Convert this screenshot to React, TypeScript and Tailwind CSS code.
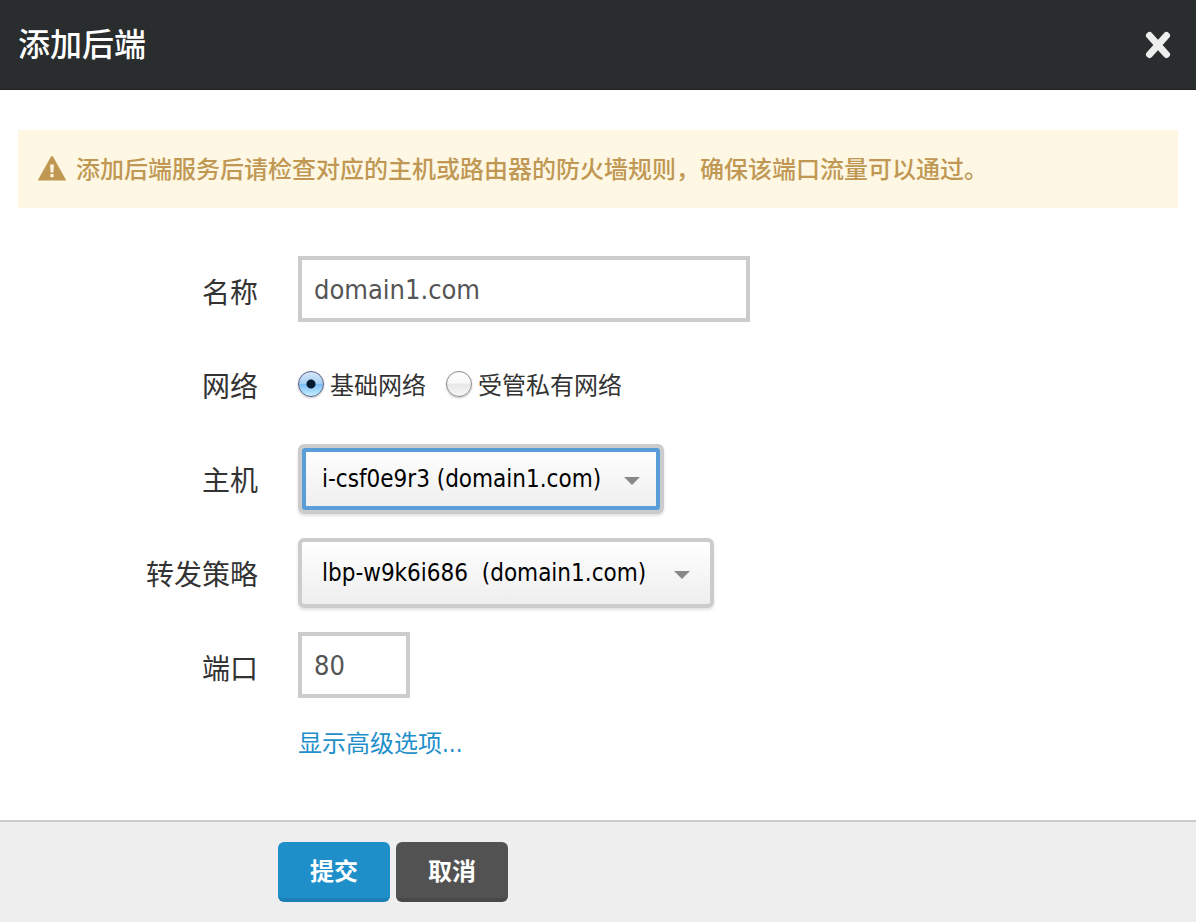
import type { ReactNode } from "react";

function Row({ label, htmlFor, children }: { label: string; htmlFor?: string; children: ReactNode }) {
  return (
    <div className="flex h-[72px] items-start gap-10">
      {htmlFor ? (
        <label htmlFor={htmlFor} className="w-60 shrink-0 text-right text-[28px] leading-[76px]">
          {label}
        </label>
      ) : (
        <span id="network-label" className="w-60 shrink-0 text-right text-[28px] leading-[76px]">
          {label}
        </span>
      )}
      {children}
    </div>
  );
}

function Radio({ label, checked }: { label: string; checked?: boolean }) {
  return (
    <label className="flex items-center gap-1.5 text-2xl">
      <input
        type="radio"
        name="network"
        defaultChecked={checked}
        className="size-[26px] appearance-none rounded-full border border-[#8c8c8c] bg-[linear-gradient(#ffffff_0%,#f8f8f8_45%,#e8e8e8_52%,#f6f6f6_100%)] shadow-[0_1px_2px_rgba(0,0,0,0.25)] checked:border-[#5c6088] checked:bg-[radial-gradient(circle,#041a30_4px,transparent_5px),linear-gradient(#d8e9f8_0%,#a5cff5_48%,#7dbcf5_52%,#c5f0ff_100%)]"
      />
      <span className="pt-1">{label}</span>
    </label>
  );
}

function Select({ id, value, className }: { id: string; value: string; className: string }) {
  return (
    <div className="grid items-center">
      <select
        id={id}
        className={
          "col-start-1 row-start-1 h-[70px] appearance-none rounded-md border-4 border-[#cccccc] bg-linear-to-b from-white to-[#eeeeee] pr-14 pl-5 text-2xl text-black shadow-[0_2px_3px_rgba(0,0,0,0.12)] outline-none " +
          className
        }
      >
        <option>{value}</option>
      </select>
      <svg
        viewBox="0 0 16 8"
        className="pointer-events-none col-start-1 row-start-1 mt-1 mr-6 h-2 w-4 justify-self-end fill-[#888888]"
        aria-hidden="true"
      >
        <path d="M0 0h16L8 8z" />
      </svg>
    </div>
  );
}

export default function App() {
  return (
    <div className="flex min-h-screen flex-col bg-white font-['DejaVu_Sans_Condensed','Noto_Sans_CJK_SC',sans-serif] text-[#333333]">
      <header className="flex h-[90px] items-center justify-between border-b border-[#1f2223] bg-[#2a2d2e] pr-6 pl-[18px]">
        <h1 className="text-[32px] leading-10 font-medium text-white">添加后端</h1>
        <button type="button" aria-label="关闭" className="p-0">
          <svg viewBox="0 0 28 28" className="size-7" fill="none" stroke="#eeeeee" strokeWidth="7" strokeLinecap="round" aria-hidden="true">
            <path d="M5.5 4.5l17 19M22.5 4.5l-17 19" />
          </svg>
        </button>
      </header>

      <form id="backend-form" className="flex-1 px-[18px] pt-10">
        <div role="alert" className="flex min-h-[78px] items-center gap-2.5 bg-[#fdf7e3] px-5 text-2xl font-medium text-[#c09853]">
          <svg viewBox="0 0 28 26" className="h-[26px] w-7 shrink-0" aria-hidden="true">
            <path d="M12.9.8Q14-.8 15.1.8L27.8 23.4Q28.2 24.6 27 24.6H1Q-.2 24.6.2 23.4z" fill="currentColor" />
            <path d="M12.1 8.5h3.8l-.5 8h-2.8zM12.4 18h3.2v3.2h-3.2z" fill="#fdf7e3" />
          </svg>
          <p className="pt-0.5">添加后端服务后请检查对应的主机或路由器的防火墙规则，确保该端口流量可以通过。</p>
        </div>

        <div className="mt-12 flex flex-col gap-[22px]">
          <Row label="名称" htmlFor="name">
            <input
              id="name"
              type="text"
              defaultValue="domain1.com"
              className="h-[66px] w-[452px] border-4 border-[#cccccc] bg-white px-3 text-[27px] text-[#555555] outline-none"
            />
          </Row>
          <Row label="网络">
            <div role="radiogroup" aria-labelledby="network-label" className="flex h-[68px] gap-5">
              <Radio label="基础网络" checked />
              <Radio label="受管私有网络" />
            </div>
          </Row>
          <Row label="主机" htmlFor="host">
            <Select id="host" value="i-csf0e9r3 (domain1.com)" className="w-[366px] inset-ring-4 inset-ring-[#5b9dd9]" />
          </Row>
          <Row label="转发策略" htmlFor="policy">
            <Select id="policy" value={"lbp-w9k6i686\u00a0 (domain1.com)"} className="w-[416px]" />
          </Row>
          <Row label="端口" htmlFor="port">
            <input
              id="port"
              type="text"
              defaultValue="80"
              className="h-[66px] w-28 border-4 border-[#cccccc] bg-white px-3 text-[27px] text-[#555555] outline-none"
            />
          </Row>
        </div>
        <a href="#advanced" className="mt-6 ml-[280px] inline-block text-2xl text-[#1f8fca]">
          显示高级选项...
        </a>
      </form>

      <footer className="flex gap-1.5 border-t-2 border-[#cccccc] bg-[#eeeeee] py-5 pl-[278px]">
        <button
          type="submit"
          form="backend-form"
          className="h-[60px] w-28 rounded-md border-b-4 border-[#1b80b5] bg-[#1f8fca] pt-1 text-2xl font-bold text-white"
        >
          提交
        </button>
        <button
          type="button"
          className="h-[60px] w-28 rounded-md border-b-4 border-[#494949] bg-[#525252] pt-1 text-2xl font-bold text-white"
        >
          取消
        </button>
      </footer>
    </div>
  );
}
